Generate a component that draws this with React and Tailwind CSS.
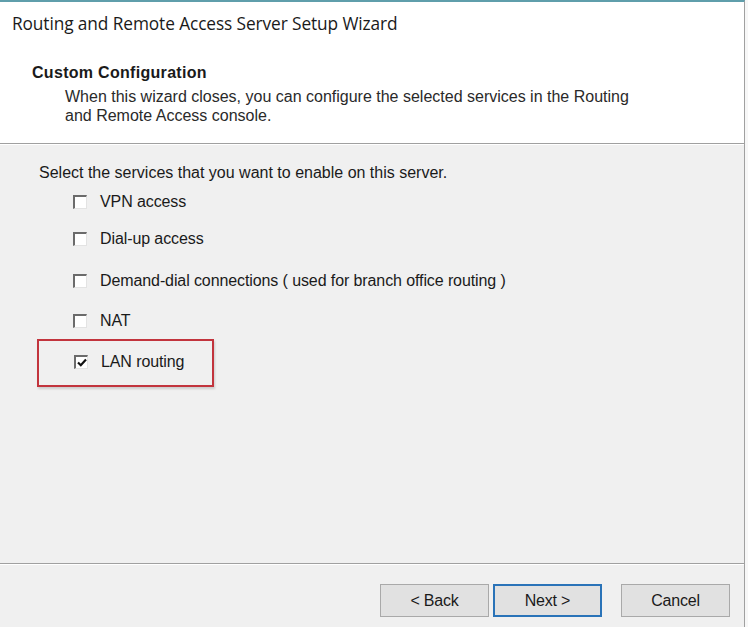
import { useState } from 'react';

const services = [
    { id: 'vpn', label: 'VPN access', checked: false, gap: 'mt-[9px]' },
    { id: 'dialup', label: 'Dial-up access', checked: false, gap: 'mt-[17px]' },
    { id: 'demand', label: 'Demand-dial connections ( used for branch office routing )', checked: false, gap: 'mt-[22px]' },
    { id: 'nat', label: 'NAT', checked: false, gap: 'mt-[20px]' },
    { id: 'lan', label: 'LAN routing', checked: true, gap: 'mt-[8px]' },
];

function CheckBox({ checked, onToggle }) {
    return (
        <button
            type="button"
            onClick={onToggle}
            className="w-[14px] h-[14px] bg-white border-t-2 border-l-2 border-r border-b border-t-[#6b6b6b] border-l-[#6b6b6b] border-r-[#e3e3e3] border-b-[#e3e3e3] flex items-center justify-center p-0"
        >
            {checked && (
                <svg width="10" height="9" viewBox="0 0 10 9">
                    <path d="M1 4.5 L3.8 7.2 L9 1.5" fill="none" stroke="#111" strokeWidth="2.2" />
                </svg>
            )}
        </button>
    );
}

function ServiceRow({ service, onToggle }) {
    const row = (
        <div className="flex items-center gap-[13px] h-[20px]">
            <CheckBox checked={service.checked} onToggle={onToggle} />
            <span className="text-[16px] text-[#1a1a1a] tracking-[-0.1px]">{service.label}</span>
        </div>
    );

    if (service.id === 'lan') {
        // highlighted option
        return (
            <div className={`${service.gap} -ml-[36px] w-[177px] h-[48px] border-2 border-[#c2343d] shadow-[1px_2px_2px_rgba(0,0,0,0.15)] flex items-center pl-[35px] pb-[2px]`}>
                {row}
            </div>
        );
    }
    return <div className={service.gap}>{row}</div>;
}

function WizardButton({ children, primary }) {
    return (
        <button
            type="button"
            className={`w-[109px] h-[33px] text-[16px] text-[#1a1a1a] bg-[#e1e1e1] tracking-[-0.2px] ${
                primary ? 'border-2 border-[#2a73b8]' : 'border border-[#a9a9a9]'
            }`}
        >
            {children}
        </button>
    );
}

export default function App() {
    const [items, setItems] = useState(services);

    const toggle = (id) => {
        setItems((prev) => prev.map((s) => (s.id === id ? { ...s, checked: !s.checked } : s)));
    };

    return (
        <div
            className="w-[748px] h-[627px] bg-[#f7f7f7] overflow-hidden"
            style={{ fontFamily: '"Liberation Sans", Arial, sans-serif' }}
        >
            <div className="w-[745px] h-full flex flex-col border-t-2 border-t-[#5f9eab] border-r border-r-[#a0a0a0] bg-[#f0f0f0]">
                <div className="h-[142px] bg-white border-b border-b-[#a0a0a0] shadow-[0_1px_0_#ffffff]">
                    <h1
                        className="pl-[12px] pt-[9px] text-[17.3px] text-[#1a1a1a] tracking-[-0.1px]"
                        style={{ fontFamily: '"Open Sans", "Noto Sans", sans-serif' }}
                    >
                        Routing and Remote Access Server Setup Wizard
                    </h1>
                    <h2 className="pl-[32px] mt-[26px] text-[16px] font-bold text-[#1a1a1a] tracking-[0.3px] leading-[20px]">
                        Custom Configuration
                    </h2>
                    <p className="pl-[65px] mt-[4px] max-w-[645px] text-[16px] text-[#2a2a2a] leading-[19px]">
                        When this wizard closes, you can configure the selected services in the Routing and Remote Access console.
                    </p>
                </div>

                <div className="flex-1 pl-[39px] pt-[19px]">
                    <p className="text-[16px] text-[#1a1a1a] leading-[20px]">
                        Select the services that you want to enable on this server.
                    </p>
                    <div className="pl-[34px] flex flex-col items-start">
                        {items.map((s) => (
                            <ServiceRow key={s.id} service={s} onToggle={() => toggle(s.id)} />
                        ))}
                    </div>
                </div>

                <div className="h-[64px] border-t border-t-[#a0a0a0] shadow-[inset_0_1px_0_#ffffff] flex items-start justify-end pt-[20px] pr-[14px]">
                    <WizardButton>&lt; Back</WizardButton>
                    <div className="ml-[4px]">
                        <WizardButton primary>Next &gt;</WizardButton>
                    </div>
                    <div className="ml-[19px]">
                        <WizardButton>Cancel</WizardButton>
                    </div>
                </div>
            </div>
        </div>
    );
}
